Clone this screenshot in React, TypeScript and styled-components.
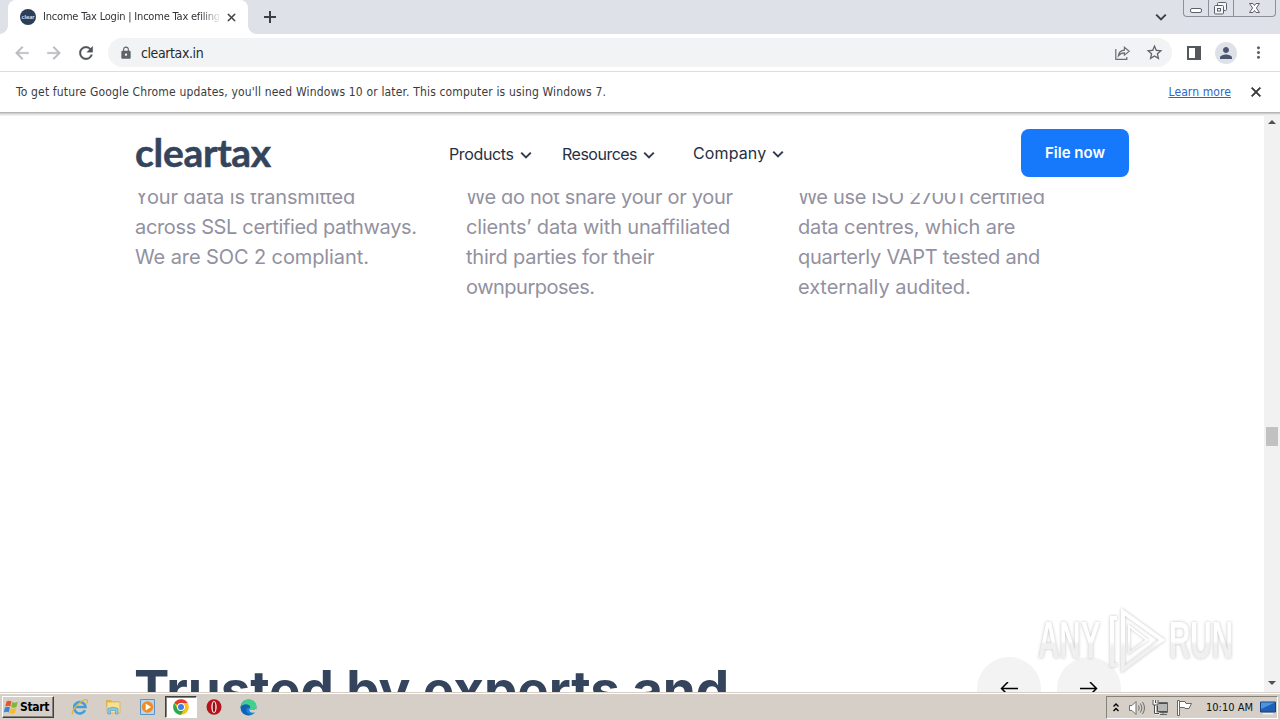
import styled, { createGlobalStyle } from "styled-components";
import {
  MdArrowBack,
  MdArrowForward,
  MdClose,
  MdLock,
  MdMoreVert,
  MdPerson,
  MdRefresh,
  MdStarBorder,
} from "react-icons/md";

const fonts = {
  system: `"DejaVu Sans Condensed", "DejaVu Sans", sans-serif`,
  site: `Inter, "Open Sans", sans-serif`,
  logo: `Lato, "Open Sans", sans-serif`,
  watermark: `"Liberation Sans", sans-serif`,
};

const colors = {
  frame: "#dee1e8",
  omnibox: "#f1f3f5",
  icon: "#5f6368",
  iconDisabled: "#b9bbbe",
  navy: "#34445c",
  nav: "#253043",
  muted: "#92919f",
  blue: "#1678fb",
  link: "#2a67c9",
  taskbar: "#d5cfc8",
};

const GlobalStyle = createGlobalStyle`
  * {
    box-sizing: border-box;
  }

  body {
    margin: 0;
    overflow: hidden;
    background: #fff;
  }

  p,
  h2 {
    margin: 0;
  }

  svg {
    display: block;
    flex: none;
  }
`;

const Screen = styled.div`
  position: relative;
  display: flex;
  flex-direction: column;
  width: 1280px;
  height: 720px;
  overflow: hidden;
  background: #fff;
  font-family: ${fonts.system};
`;

const Text = styled.span<{ $spacing?: number }>`
  white-space: nowrap;
  letter-spacing: ${({ $spacing = 0 }) => $spacing}px;
`;

/* Tab strip */

const TabStrip = styled.div`
  display: flex;
  align-items: flex-start;
  height: 34px;
  padding-left: 8px;
  background: ${colors.frame};
`;

const Tab = styled.div`
  position: relative;
  display: flex;
  align-items: center;
  width: 240px;
  height: 34px;
  padding: 0 9px 0 12px;
  border-radius: 8px 8px 0 0;
  background: #fff;

  &::before,
  &::after {
    content: "";
    position: absolute;
    bottom: 0;
    width: 8px;
    height: 8px;
  }

  &::before {
    left: -8px;
    background: radial-gradient(circle at 0 0, transparent 7.5px, #fff 8px);
  }

  &::after {
    right: -8px;
    background: radial-gradient(circle at 100% 0, transparent 7.5px, #fff 8px);
  }
`;

const Favicon = styled.div`
  display: flex;
  flex: none;
  align-items: center;
  justify-content: center;
  width: 16px;
  height: 16px;
  border-radius: 50%;
  background: #2c3e58;
  color: #dfe6ee;
  font: bold 6px/16px ${fonts.logo};
`;

const TabTitle = styled.div`
  width: 176px;
  margin-left: 7px;
  overflow: hidden;
  color: #303338;
  font-size: 11px;
  line-height: 16px;
  mask-image: linear-gradient(90deg, #000 158px, transparent 178px);
`;

const CloseIcon = styled(MdClose)`
  path:not([fill="none"]) {
    stroke: currentColor;
    stroke-width: 1;
  }
`;

const TabClose = styled.div`
  margin-left: 6px;
  color: #3c4043;
`;

const NewTab = styled.div`
  margin: 10px 0 0 15px;
`;

const TabSearch = styled.div`
  margin: 13px 16px 0 auto;
`;

const WindowButtons = styled.div`
  display: flex;
  width: 93px;
  height: 17px;
  margin-right: 4px;
  border: 1px solid #8b9099;
  border-top: 0;
  border-radius: 0 0 4px 4px;
`;

const WindowButton = styled.div<{ $width: number }>`
  width: ${({ $width }) => $width}px;
  height: 16px;

  & + & {
    border-left: 1px solid #8b9099;
  }
`;

/* Address bar */

const Toolbar = styled.div`
  display: flex;
  align-items: center;
  height: 38px;
  padding: 0 12px;
  border-bottom: 1px solid #dcdde0;
  background: #fff;
  color: ${colors.icon};
`;

const NavButton = styled.div<{ $disabled?: boolean }>`
  width: 32px;
  color: ${({ $disabled }) => ($disabled ? colors.iconDisabled : "#4f5358")};

  path:not([fill="none"]) {
    stroke: currentColor;
    stroke-width: 0.4;
  }
`;

const Omnibox = styled.div`
  display: flex;
  align-items: center;
  width: 1064px;
  height: 29px;
  padding: 0 8px 0 11px;
  border-radius: 15px;
  background: ${colors.omnibox};
`;

const Url = styled.div`
  flex: 1;
  margin-left: 8px;
  color: #26292d;
  font-size: 14px;
  line-height: 20px;
`;

const OmniboxIcon = styled.div`
  margin-left: 14px;
`;

const PanelIcon = styled.div`
  width: 14px;
  height: 14px;
  margin-left: 15px;
  border: 2px solid #54575c;
  border-right-width: 6px;
`;

const Avatar = styled.div`
  display: flex;
  align-items: center;
  justify-content: center;
  width: 22px;
  height: 22px;
  margin: 0 12px 0 14px;
  border-radius: 50%;
  background: #dee1e8;
  color: #4c5670;
`;

/* Update notice */

const InfoBar = styled.div`
  display: flex;
  align-items: center;
  height: 40px;
  padding: 0 16px;
  background: #fff;
  color: #3a3b3e;
  font-size: 12px;
`;

const LearnMore = styled.span`
  margin: 0 17px 0 auto;
  color: ${colors.link};
  text-decoration: underline;
`;

const Shadow = styled.div`
  flex: none;
  height: 4px;
  background: linear-gradient(#b4b4b4 0 1px, #cfcfcf 1px 2px, #e4e4e4 2px 3px, #f1f1f1 3px);
`;

/* Web page */

const Viewport = styled.div`
  display: flex;
  height: 576px;
  overflow: hidden;
`;

const Page = styled.main`
  display: flex;
  flex-direction: column;
  width: 1264px;
  font-family: ${fonts.site};
`;

const Header = styled.header`
  display: flex;
  flex: none;
  height: 77px;
  padding-left: 135px;
  background: #fff;
`;

const Logo = styled.div`
  width: 314px;
  padding-top: 11px;
  color: ${colors.navy};
  font: bold 39px/50px ${fonts.logo};
  -webkit-text-stroke: 0.5px ${colors.navy};
`;

const NavItem = styled.div<{ $width: number; $top: number }>`
  display: flex;
  gap: 6px;
  width: ${({ $width }) => $width}px;
  padding-top: ${({ $top }) => $top}px;
  color: ${colors.nav};
  font-size: 16px;
  line-height: 20px;

  svg {
    margin-top: 7px;
  }
`;

const FileButton = styled.div`
  width: 108px;
  height: 48px;
  margin-top: 13px;
  border-radius: 8px;
  background: ${colors.blue};
  color: #fff;
  font-size: 15px;
  font-weight: 600;
  line-height: 48px;
  text-align: center;
`;

const Features = styled.section`
  display: grid;
  flex: none;
  grid-template-columns: 331px 332px 300px;
  height: 419px;
  padding-left: 135px;
  overflow: hidden;
`;

const Feature = styled.p`
  display: flex;
  flex-direction: column;
  margin-top: -11px;
  color: ${colors.muted};
  font-size: 20px;
  line-height: 30px;
`;

const Experts = styled.section`
  display: flex;
  flex: none;
  justify-content: space-between;
  height: 80px;
  padding: 45px 143px 0 134px;
`;

const Title = styled.h2`
  padding-top: 1px;
  color: ${colors.navy};
  font-size: 53px;
  font-weight: 700;
  line-height: 64px;
`;

const Arrows = styled.div`
  display: flex;
  gap: 16px;
`;

const ArrowButton = styled.div`
  display: flex;
  align-items: center;
  justify-content: center;
  width: 64px;
  height: 64px;
  border-radius: 50%;
  background: #f3f3f3;
`;

const Scrollbar = styled.div`
  display: flex;
  flex-direction: column;
  align-items: center;
  justify-content: space-between;
  width: 16px;
  padding: 4px 0 7px;
  background: #f1f1f1;
`;

const Thumb = styled.div`
  width: 12px;
  height: 19px;
  margin-top: 68px;
  background: #c1c1c1;
`;

/* Recorder mark floating over the page */

const Watermark = styled.div`
  position: absolute;
  left: 1038px;
  top: 608px;
  display: flex;
  align-items: center;
  width: 198px;
  height: 66px;
  filter: drop-shadow(0 0 1.5px rgba(0, 0, 0, 0.25));
`;

const WatermarkWord = styled.div`
  width: 65px;
  color: transparent;
  font: bold 51px/66px ${fonts.watermark};

  span {
    display: inline-block;
    background: linear-gradient(#fff 50%, #f0f0f0 55%);
    background-clip: text;
    transform: scaleX(0.58);
    transform-origin: 0 50%;
  }
`;

/* Taskbar */

const Taskbar = styled.div`
  display: flex;
  align-items: flex-start;
  height: 28px;
  padding: 3px 2px 0;
  border-top: 1px solid #d5cfc8;
  background: ${colors.taskbar};
  box-shadow: inset 0 1px #fff;
`;

const StartButton = styled.div`
  display: flex;
  align-items: center;
  width: 52px;
  height: 22px;
  border: 1px solid;
  border-color: #fff #404040 #404040 #fff;
  box-shadow: inset -1px -1px #85817b;
  color: #000;
  font-size: 12px;
  font-weight: bold;
`;

const TaskButton = styled.div<{ $active?: boolean }>`
  display: flex;
  align-items: center;
  justify-content: center;
  width: ${({ $active }) => ($active ? 32 : 34)}px;
  height: 22px;
  ${({ $active }) =>
    $active &&
    `
    background: #fff;
    border: 1px solid;
    border-color: #404040 #fff #fff #404040;
    box-shadow: inset 1px 1px #85817b;
  `}
`;

const Quick = styled.div`
  display: flex;
  margin-left: 9px;
`;

const Tray = styled.div`
  display: flex;
  align-items: center;
  width: 172px;
  height: 23px;
  margin-left: auto;
  padding-left: 6px;
  border: 1px solid;
  border-color: #85817b #fff #fff #85817b;
  color: #111;
  font-size: 11px;
`;

const TrayIcon = styled.div<{ $width: number }>`
  width: ${({ $width }) => $width}px;
`;

const Clock = styled.div`
  width: 54px;
`;

const Chevron = ({ color = "#2f3b4e" }: { color?: string }) => (
  <svg width="12" height="9" viewBox="0 0 12 9">
    <path d="M1.2 1.6 6 6.4l4.8-4.8" fill="none" stroke={color} strokeWidth="2" />
  </svg>
);

const ShareIcon = () => (
  <svg width="16" height="16" viewBox="0 0 16 16" fill="none" stroke="#6a6d72" strokeWidth="1.2">
    <path d="M.8 4v10.400h11V12" />
    <path d="M3.400 10.800c.4-3.600 2.400-5.400 6-5.600V2.200l4.800 4-4.800 3.900V7.800c-2.600 0-4.500.9-6 3z" />
  </svg>
);

const WindowsFlag = () => (
  <svg width="17" height="17" viewBox="0 0 17 17">
    <path d="M3.500 2.500c2-1.200 3.500-.8 5 .1L7.300 7.600c-1.500-.9-3-1.100-5 0z" fill="#e8552b" />
    <path d="M9.300 3c1.700.9 3.300 1 5.500-.2l-1.300 5c-2 1.200-3.700 1-5.300.2z" fill="#7cb63c" />
    <path d="M2 8.500c2-1.100 3.500-.8 5 .1l-1.300 5c-1.400-1-3-1.100-5 0z" fill="#3c86d0" />
    <path d="M7.900 9c1.700.9 3.300 1 5.400-.2l-1.300 5c-2 1.200-3.700 1-5.400.2z" fill="#f5bd2c" />
  </svg>
);

const ExplorerIcon = () => (
  <svg width="18" height="18" viewBox="0 0 18 18" fill="none">
    <path d="M14 12.200A5.700 5.700 0 1 1 14.500 9H4.500" stroke="#3f9fdd" strokeWidth="2.600" />
    <path d="M2 16.200C-2 13.500 12.500-.8 16.100 2c.8.700.5 2-.4 3.300" stroke="#e0b53f" strokeWidth="1.300" />
  </svg>
);

const FolderIcon = () => (
  <svg width="18" height="18" viewBox="0 0 18 18">
    <path d="M1 4V2h5l1 1.500h7V8H1z" fill="#d9b54f" />
    <path d="M2 4h13v11H2z" fill="#f7e08f" stroke="#d7b456" strokeWidth=".8" />
    <path d="M3 16v-5.500q5-2.500 10 0V16h-2.500v-3.500h-5V16z" fill="#8fc6e5" stroke="#5b9fc5" strokeWidth=".7" />
  </svg>
);

const MediaIcon = () => (
  <svg width="18" height="18" viewBox="0 0 18 18">
    <path d="M1.500 1.500h14v15h-14z" fill="#b8d5ee" stroke="#5b93c7" />
    <circle cx="8.500" cy="9" r="5.700" fill="#f28c1c" />
    <path d="M6.700 5.600v6.800L12 9z" fill="#fff" />
  </svg>
);

const ChromeIcon = () => (
  <svg width="16" height="16" viewBox="0 0 16 16">
    <circle cx="8" cy="8" r="7.800" fill="#fbc116" />
    <path d="M8 8 1.250 4.100A7.800 7.800 0 0 1 14.750 4.100H8z" fill="#e33b2e" />
    <path d="M1.250 4.100A7.800 7.800 0 0 0 8 15.800l3.400-5.900L8 8 4.600 9.900z" fill="#2da94f" />
    <circle cx="8" cy="8" r="3.900" fill="#fff" />
    <circle cx="8" cy="8" r="3" fill="#3f7de8" />
  </svg>
);

const OperaIcon = () => (
  <svg width="16" height="16" viewBox="0 0 16 16">
    <ellipse cx="8" cy="8" rx="7.500" ry="7.800" fill="#b5141c" />
    <ellipse cx="8" cy="8" rx="2.700" ry="6" fill="#f0e8e5" />
    <ellipse cx="8" cy="8" rx="1.300" ry="5" fill="#931016" />
  </svg>
);

const EdgeIcon = () => (
  <svg width="17" height="17" viewBox="0 0 17 17">
    <circle cx="8.500" cy="8.500" r="8" fill="#1684d8" />
    <path d="M.8 7.300C2 2.400 5.500.500 8.800.500c4.500 0 7.700 3.300 7.700 6.500 0 2.600-2 4-4.400 4-2 0-2.800-.8-2-1.900C11.200 6.500 6.500 3.500.8 7.300z" fill="#43cf8c" />
    <path d="M.8 7.300C5 4.200 10.700 5.500 10.100 9.100 7.500 7.200 5.500 10 6.500 12.600c.8 2.300 3.300 3.500 5.500 3A8 8 0 0 1 .8 7.300z" fill="#185fb4" />
    <path d="M10.100 9.100c-.8 1.100 0 1.900 2 1.900 1.600 0 2.900-.6 3.700-1.600l1 3.400-3.600 1C10 14 8.300 11.500 10.100 9.100z" fill={colors.taskbar} />
  </svg>
);

const SpeakerIcon = () => (
  <svg width="18" height="16" viewBox="0 0 18 16" fill="none" stroke="#6d6d6d">
    <path d="M1.500 5.500H4l4-4v13l-4-4H1.500z" fill="#fff" />
    <path d="M10.500 5.500q1.500 2.500 0 5M12.500 3.500q3 4.500 0 9M14.500 2q4 6 0 12" />
  </svg>
);

const NetworkIcon = () => (
  <svg width="18" height="17" viewBox="0 0 18 17" fill="none" stroke="#4e4e4e">
    <path d="M5.500 4.500h10v8h-10z" fill="#b7b7b7" />
    <path d="M4.500 3.500h11v10h-11zM8 15.500h7M11 13.500v2" stroke="#666" />
    <path d="M1.500 1.500v4h4v-4M3.500 5.500v9h4M3 1v4" stroke="#fff" strokeWidth="2" />
    <path d="M1 1v5h5V1M3.500 1v3M2.500 6v8.500H7" />
  </svg>
);

const FlagIcon = () => (
  <svg width="17" height="17" viewBox="0 0 17 17" fill="#fff" stroke="#686868">
    <path d="M.5 1.500h2v15h-2z" />
    <path d="M2.500 2.500H8l1 2h5.500l-2.500 5H8L7.500 8.500h-5z" />
  </svg>
);

const DesktopIcon = () => (
  <svg width="16" height="14" viewBox="0 0 16 14">
    <path d="M.5 1h15v10H.500z" fill="#1f5fb5" stroke="#17407c" />
    <path d="M1 1.500h14L1 8z" fill="#4b94df" />
    <path d="M3 12h10v1.500H3z" fill="#eef1f5" />
  </svg>
);

type Line = [text: string, spacing: number];

const features: Line[][] = [
  [
    ["Your data is transmitted", -0.13],
    ["across SSL certified pathways.", -0.35],
    ["We are SOC 2 compliant.", -0.1],
  ],
  [
    ["We do not share your or your", -0.3],
    ["clients’ data with unaffiliated", -0.17],
    ["third parties for their", -0.22],
    ["ownpurposes.", -0.5],
  ],
  [
    ["We use ISO 27001 certified", -0.34],
    ["data centres, which are", -0.17],
    ["quarterly VAPT tested and", -0.24],
    ["externally audited.", -0.08],
  ],
];

const navItems = [
  { label: "Products", width: 113, top: 28, spacing: -0.35 },
  { label: "Resources", width: 131, top: 28, spacing: -0.5 },
  { label: "Company", width: 328, top: 27, spacing: 0.12 },
];

const App = () => (
  <Screen>
    <GlobalStyle />
    <TabStrip>
      <Tab>
        <Favicon>clear</Favicon>
        <TabTitle>
          <Text $spacing={-0.2}>Income Tax Login | Income Tax efiling</Text>
        </TabTitle>
        <TabClose>
          <CloseIcon size={13} />
        </TabClose>
      </Tab>
      <NewTab>
        <svg width="14" height="14" viewBox="0 0 14 14">
          <path d="M7 1v12M1 7h12" stroke="#3c4043" strokeWidth="2" />
        </svg>
      </NewTab>
      <TabSearch>
        <Chevron color="#3c4043" />
      </TabSearch>
      <WindowButtons>
        <WindowButton $width={24}>
          <svg width="24" height="16" viewBox="0 0 24 16">
            <rect x="6.500" y="8.500" width="11" height="4" rx="1.500" fill="#fff" stroke="#5c606a" />
          </svg>
        </WindowButton>
        <WindowButton $width={25}>
          <svg width="24" height="16" viewBox="0 0 24 16" fill="#f5f6f8" stroke="#5c606a">
            <rect x="8.500" y="2.500" width="9" height="8" rx="1" />
            <rect x="5.500" y="5.500" width="9" height="8.500" rx="1" />
            <rect x="8.500" y="8.500" width="3" height="2.500" />
          </svg>
        </WindowButton>
        <WindowButton $width={42}>
          <svg width="40" height="16" viewBox="0 0 40 16">
            <path
              d="M15.500 3.500H19l1.500 2 1.500-2h3.500L22.400 8l3.100 4.500H22l-1.500-2-1.500 2h-3.500L18.600 8z"
              fill="#fff"
              stroke="#5c606a"
            />
          </svg>
        </WindowButton>
      </WindowButtons>
    </TabStrip>

    <Toolbar>
      <NavButton $disabled>
        <MdArrowBack size={20} />
      </NavButton>
      <NavButton $disabled>
        <MdArrowForward size={20} />
      </NavButton>
      <NavButton>
        <MdRefresh size={20} />
      </NavButton>
      <Omnibox>
        <MdLock size={14} />
        <Url>
          <Text $spacing={-0.4}>cleartax.in</Text>
        </Url>
        <ShareIcon />
        <OmniboxIcon>
          <MdStarBorder size={19} />
        </OmniboxIcon>
      </Omnibox>
      <PanelIcon />
      <Avatar>
        <MdPerson size={18} />
      </Avatar>
      <MdMoreVert size={19} />
    </Toolbar>

    <InfoBar>
      <Text $spacing={0.16}>
        To get future Google Chrome updates, you'll need Windows 10 or later. This computer is using Windows 7.
      </Text>
      <LearnMore>
        <Text $spacing={0.1}>Learn more</Text>
      </LearnMore>
      <CloseIcon size={16} />
    </InfoBar>
    <Shadow />

    <Viewport>
      <Page>
        <Header>
          <Logo>
            <Text $spacing={-0.3}>cleartax</Text>
          </Logo>
          {navItems.map(({ label, width, top, spacing }) => (
            <NavItem key={label} $width={width} $top={top}>
              <Text $spacing={spacing}>{label}</Text>
              <Chevron />
            </NavItem>
          ))}
          <FileButton>File now</FileButton>
        </Header>
        <Features>
          {features.map((lines) => (
            <Feature key={lines[0][0]}>
              {lines.map(([text, spacing]) => (
                <Text key={text} $spacing={spacing}>
                  {text}
                </Text>
              ))}
            </Feature>
          ))}
        </Features>
        <Experts>
          <Title>
            <Text $spacing={-0.1}>Trusted by experts and</Text>
          </Title>
          <Arrows>
            <ArrowButton>
              <svg width="18" height="14" viewBox="0 0 18 14" fill="none" stroke="#000" strokeWidth="1.500">
                <path d="M18 6.500H1.500M8 0 1.500 6.500 8 13" />
              </svg>
            </ArrowButton>
            <ArrowButton>
              <svg width="18" height="14" viewBox="0 0 18 14" fill="none" stroke="#000" strokeWidth="1.500">
                <path d="M0 6.500h16.500M10 0l6.500 6.500L10 13" />
              </svg>
            </ArrowButton>
          </Arrows>
        </Experts>
      </Page>
      <Scrollbar>
        <svg width="8" height="4" viewBox="0 0 8 4">
          <path d="M0 4 4 0l4 4z" fill="#505050" />
        </svg>
        <Thumb />
        <svg width="8" height="4" viewBox="0 0 8 4">
          <path d="M0 0h8L4 4z" fill="#505050" />
        </svg>
      </Scrollbar>
    </Viewport>

    <Taskbar>
      <StartButton>
        <WindowsFlag />
        <Text $spacing={-0.3}>Start</Text>
      </StartButton>
      <Quick>
        <TaskButton>
          <ExplorerIcon />
        </TaskButton>
        <TaskButton>
          <FolderIcon />
        </TaskButton>
        <TaskButton>
          <MediaIcon />
        </TaskButton>
        <TaskButton $active>
          <ChromeIcon />
        </TaskButton>
        <TaskButton>
          <OperaIcon />
        </TaskButton>
        <TaskButton>
          <EdgeIcon />
        </TaskButton>
      </Quick>
      <Tray>
        <TrayIcon $width={15}>
          <svg width="6" height="9" viewBox="0 0 6 9" fill="none" stroke="#000" strokeWidth="1.400">
            <path d="M.5 3.500 3 1l2.500 2.500M.5 8 3 5.500 5.500 8" />
          </svg>
        </TrayIcon>
        <TrayIcon $width={24}>
          <SpeakerIcon />
        </TrayIcon>
        <TrayIcon $width={25}>
          <NetworkIcon />
        </TrayIcon>
        <TrayIcon $width={29}>
          <FlagIcon />
        </TrayIcon>
        <Clock>
          <Text>10:10 AM</Text>
        </Clock>
        <DesktopIcon />
      </Tray>
    </Taskbar>

    <Watermark>
      <WatermarkWord>
        <span>ANY</span>
      </WatermarkWord>
      <svg width="66" height="66" viewBox="0 0 66 66" fill="none" strokeWidth="4">
        <defs>
          <linearGradient id="fade" x1="0" y1="0" x2="0" y2="66" gradientUnits="userSpaceOnUse">
            <stop offset=".5" stopColor="#fff" />
            <stop offset=".6" stopColor="#f0f0f0" />
          </linearGradient>
        </defs>
        <path d="M14 10H9v47h5" stroke="url(#fade)" />
        <path d="M20 4v57l39-29z" stroke="url(#fade)" />
        <path d="M26 18v27l18-13z" stroke="url(#fade)" strokeWidth="2" />
      </svg>
      <WatermarkWord>
        <span>RUN</span>
      </WatermarkWord>
    </Watermark>
  </Screen>
);

export default App;
